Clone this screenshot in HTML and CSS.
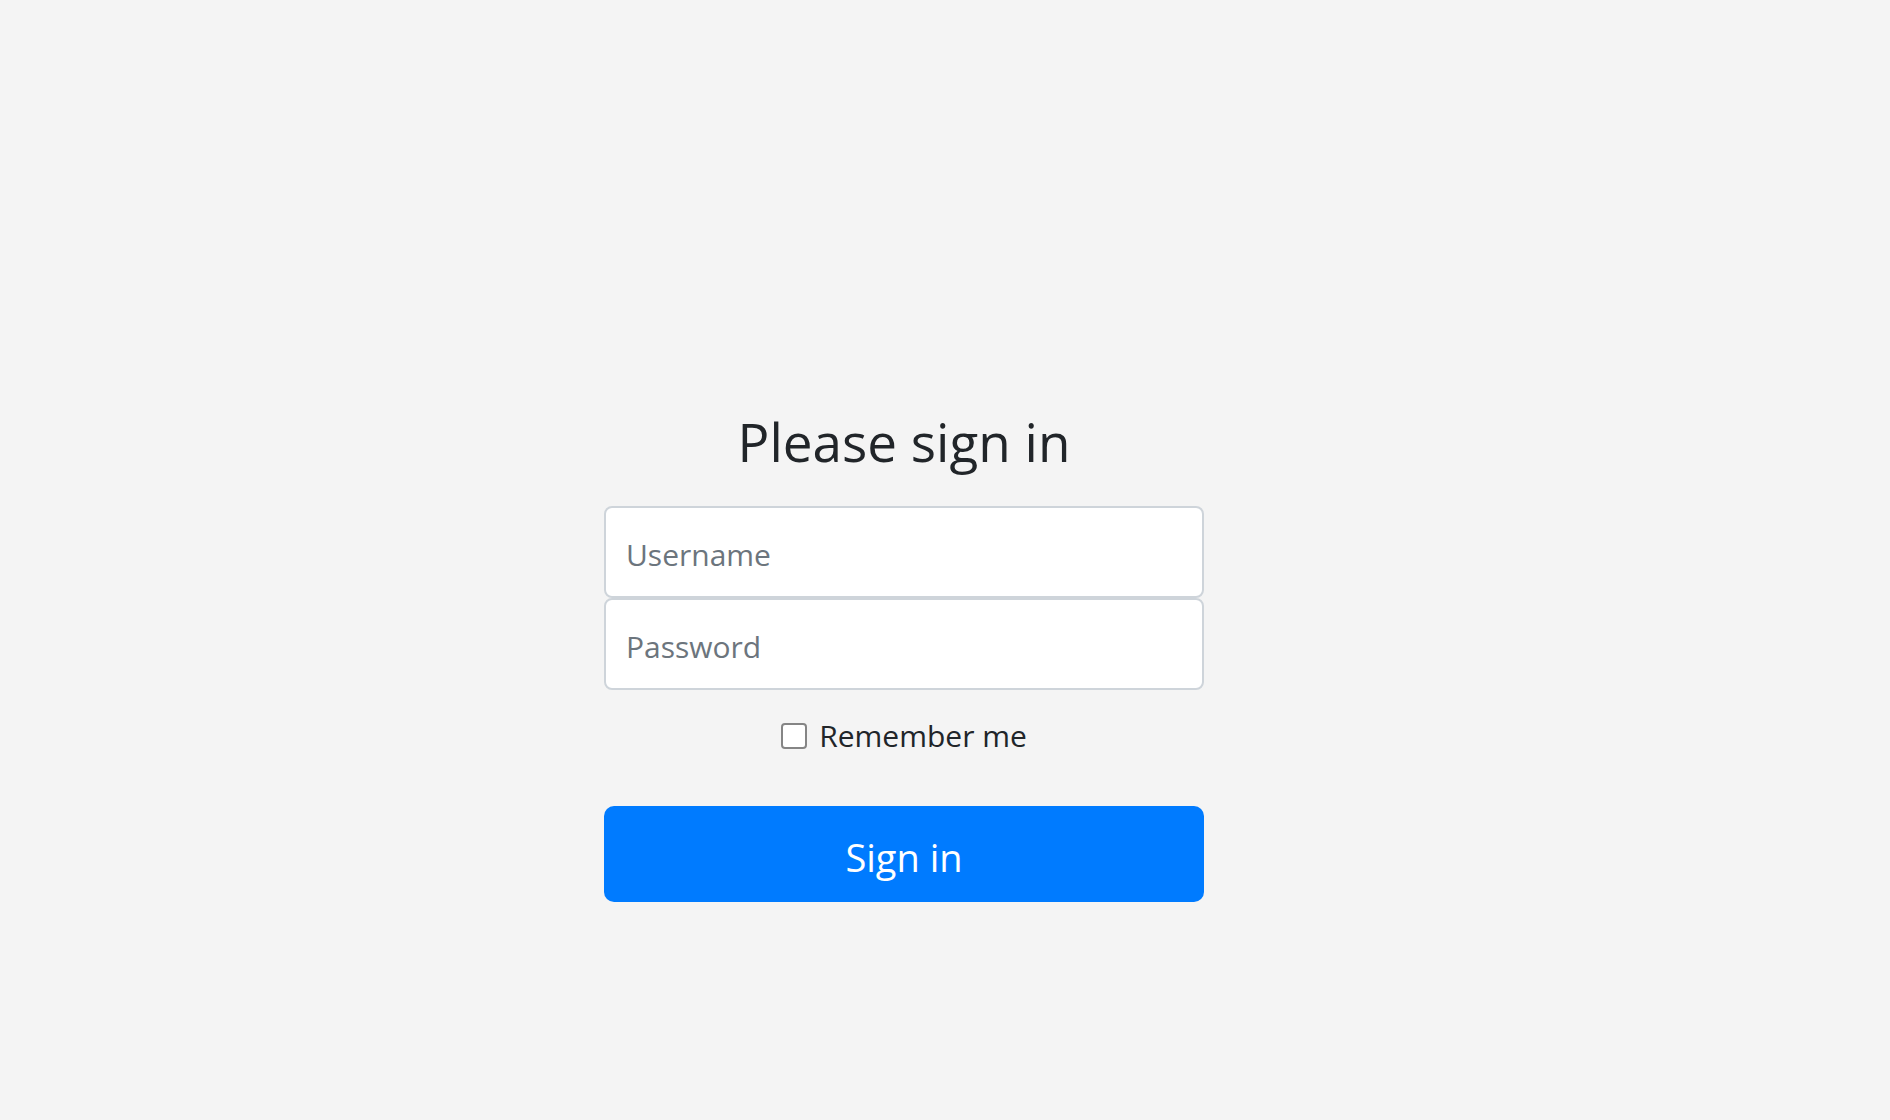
FILE: index.html
```html
<!DOCTYPE html>
<html lang="en">
<head>
<meta charset="utf-8">
<title>Please sign in</title>
<link rel="stylesheet" href="styles.css">
</head>
<body>
<main class="page">
  <form class="form-signin">
    <h1 class="title">Please sign in</h1>
    <input class="field" type="text" placeholder="Username">
    <input class="field" type="password" placeholder="Password">
    <div class="checkbox">
      <label class="check-label"><input class="check-box" type="checkbox"><span>Remember me</span></label>
    </div>
    <button class="btn-signin" type="button">Sign in</button>
  </form>
</main>
</body>
</html>
```
FILE: styles.css
```css
html, body {
  margin: 0;
  padding: 0;
  background: #f4f4f4;
  font-family: "Open Sans", "Noto Sans", sans-serif;
  color: #212529;
}
.page {
  min-height: 1120px;
  box-sizing: border-box;
  padding: 407px 82px 0 0;
  display: flex;
  justify-content: center;
  align-items: flex-start;
}
.form-signin {
  width: 600px;
  text-align: center;
  display: flex;
  flex-direction: column;
}
.title {
  font-size: 53px;
  font-weight: 400;
  line-height: 70px;
  margin: 0 0 29px;
}
.field {
  display: block;
  width: 100%;
  box-sizing: border-box;
  height: 92px;
  padding: 5px 20px 0;
  font-size: 30px;
  font-family: inherit;
  color: #495057;
  background: #fff;
  border: 2px solid #ced4da;
  border-radius: 8px;
  outline: none;
  margin: 0;
}
.field::placeholder {
  color: #6c757d;
  opacity: 1;
}
.checkbox {
  margin: 20px 0 32px;
}
.check-label {
  display: inline-flex;
  align-items: center;
  gap: 12px;
  height: 48px;
  box-sizing: border-box;
  padding-top: 3px;
  margin-bottom: 16px;
  font-size: 30px;
}
.check-box {
  appearance: none;
  -webkit-appearance: none;
  width: 26px;
  height: 26px;
  margin: 0;
  border: 2px solid #858585;
  border-radius: 4px;
  background: #fff;
  box-sizing: border-box;
}
.btn-signin {
  display: block;
  width: 100%;
  height: 96px;
  border: none;
  border-radius: 10px;
  background: #007bff;
  color: #fff;
  font-family: inherit;
  font-size: 38px;
  padding: 5px 0 0;
  cursor: pointer;
}
```
